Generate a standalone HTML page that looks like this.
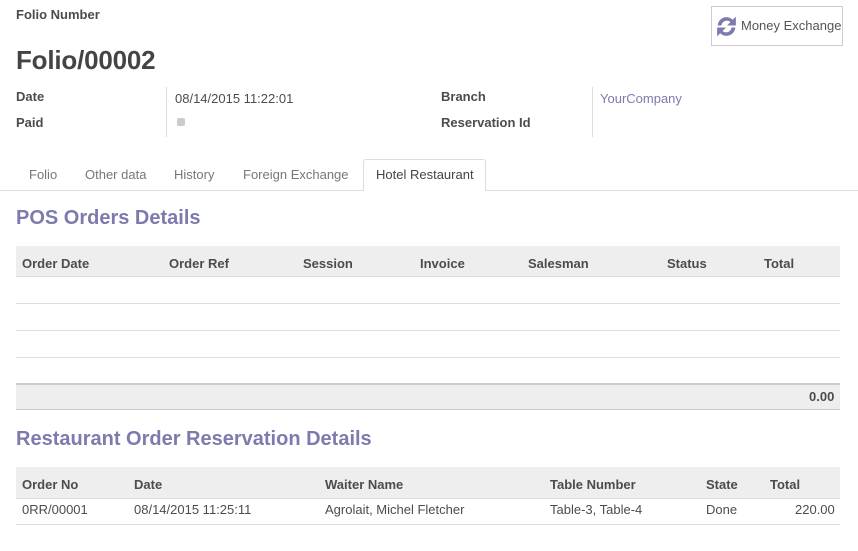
<!DOCTYPE html>
<html><head><meta charset="utf-8"><style>
*{margin:0;padding:0;box-sizing:border-box}
body{width:858px;height:551px;background:#fff;font-family:"Liberation Sans",sans-serif;font-size:13px;color:#4c4c4c;position:relative;overflow:hidden}
.a{position:absolute;white-space:nowrap}
.b{font-weight:bold}
.h{color:#7c7bad;font-size:20px;font-weight:bold}
.line{position:absolute;height:1px;background:#ddd}
</style></head><body>
<div class="a b" style="left:16px;top:7px">Folio Number</div>
<div class="a" style="left:711px;top:6px;width:132px;height:40px;border:1px solid #ccc"></div>
<svg class="a" style="left:714px;top:14px" width="25" height="25" viewBox="0 0 24 24"><path d="M3.5 11 A8.5 8.5 0 0 1 18 5.5 L21 2.5 V11 H12.5 L15.8 7.7 A5.2 5.2 0 0 0 7.2 11 Z" fill="#7c7bad"/><path d="M20.5 13 A8.5 8.5 0 0 1 6 18.5 L3 21.5 V13 H11.5 L8.2 16.3 A5.2 5.2 0 0 0 16.8 13 Z" fill="#7c7bad"/></svg>
<div class="a" style="left:741px;top:18px;color:#555">Money Exchange</div>
<div class="a b" style="left:16px;top:45px;font-size:26px;color:#444;letter-spacing:-0.2px">Folio/00002</div>
<div class="a b" style="left:16px;top:89px">Date</div>
<div class="a b" style="left:16px;top:115px">Paid</div>
<div class="a" style="left:166px;top:87px;width:1px;height:50px;background:#ddd"></div>
<div class="a" style="left:175px;top:91px">08/14/2015 11:22:01</div>
<div class="a" style="left:177px;top:118px;width:8px;height:8px;background:#ccc;border-radius:2px"></div>
<div class="a b" style="left:441px;top:89px">Branch</div>
<div class="a b" style="left:441px;top:115px">Reservation Id</div>
<div class="a" style="left:592px;top:87px;width:1px;height:50px;background:#ddd"></div>
<div class="a" style="left:600px;top:91px;color:#7c7bad">YourCompany</div>
<div class="line" style="left:0;top:190px;width:858px"></div>
<div class="a" style="left:363px;top:159px;width:123px;height:32px;border:1px solid #ddd;border-bottom:none;background:#fff;border-radius:3px 3px 0 0"></div>
<div class="a" style="left:29px;top:167px;color:#777">Folio</div>
<div class="a" style="left:85px;top:167px;color:#777">Other data</div>
<div class="a" style="left:174px;top:167px;color:#777">History</div>
<div class="a" style="left:243px;top:167px;color:#777">Foreign Exchange</div>
<div class="a" style="left:376px;top:167px;color:#444">Hotel Restaurant</div>
<div class="a h" style="left:16px;top:207px">POS Orders Details</div>
<div class="a" style="left:16px;top:246px;width:824px;height:31px;background:#eee;border-bottom:1px solid #ddd"></div>
<div class="a b" style="left:22px;top:256px">Order Date</div>
<div class="a b" style="left:169px;top:256px">Order Ref</div>
<div class="a b" style="left:303px;top:256px">Session</div>
<div class="a b" style="left:420px;top:256px">Invoice</div>
<div class="a b" style="left:528px;top:256px">Salesman</div>
<div class="a b" style="left:667px;top:256px">Status</div>
<div class="a b" style="left:764px;top:256px">Total</div>
<div class="line" style="left:16px;top:303px;width:824px"></div>
<div class="line" style="left:16px;top:330px;width:824px"></div>
<div class="line" style="left:16px;top:357px;width:824px"></div>
<div class="a" style="left:16px;top:383px;width:824px;height:27px;background:#eee;border-top:2px solid #ccc;border-bottom:1px solid #ccc"></div>
<div class="a b" style="left:809px;top:389px">0.00</div>
<div class="a h" style="left:16px;top:428px">Restaurant Order Reservation Details</div>
<div class="a" style="left:16px;top:467px;width:824px;height:32px;background:#eee;border-bottom:1px solid #ddd"></div>
<div class="a b" style="left:22px;top:477px">Order No</div>
<div class="a b" style="left:134px;top:477px">Date</div>
<div class="a b" style="left:325px;top:477px">Waiter Name</div>
<div class="a b" style="left:550px;top:477px">Table Number</div>
<div class="a b" style="left:706px;top:477px">State</div>
<div class="a b" style="left:770px;top:477px">Total</div>
<div class="a" style="left:22px;top:502px">0RR/00001</div>
<div class="a" style="left:134px;top:502px">08/14/2015 11:25:11</div>
<div class="a" style="left:325px;top:502px">Agrolait, Michel Fletcher</div>
<div class="a" style="left:550px;top:502px">Table-3, Table-4</div>
<div class="a" style="left:706px;top:502px">Done</div>
<div class="a" style="left:795px;top:502px">220.00</div>
<div class="line" style="left:16px;top:524px;width:824px"></div>
</body></html>
